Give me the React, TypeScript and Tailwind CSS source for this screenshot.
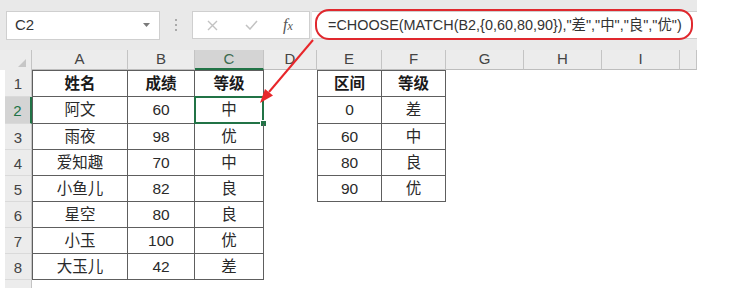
import React from "react";

const COLS = [
  { key: "A", w: "w-[96px]" },
  { key: "B", w: "w-[67px]" },
  { key: "C", w: "w-[69px]" },
  { key: "D", w: "w-[53px]" },
  { key: "E", w: "w-[65px]" },
  { key: "F", w: "w-[64px]" },
  { key: "G", w: "w-[78px]" },
  { key: "H", w: "w-[78px]" },
  { key: "I", w: "w-[78px]" },
  { key: "", w: "w-[17px]" },
];

// scores table (A1:C8) and lookup table (E1:F5)
const scores = [
  ["姓名", "成绩", "等级"],
  ["阿文", "60", "中"],
  ["雨夜", "98", "优"],
  ["爱知趣", "70", "中"],
  ["小鱼儿", "82", "良"],
  ["星空", "80", "良"],
  ["小玉", "100", "优"],
  ["大玉儿", "42", "差"],
];

const ranges = [
  ["区间", "等级"],
  ["0", "差"],
  ["60", "中"],
  ["80", "良"],
  ["90", "优"],
];

function cellValue(row: number, col: number) {
  if (col <= 2) return scores[row - 1]?.[col];
  if (col === 4 || col === 5) return ranges[row - 1]?.[col - 4];
  return undefined;
}

function inTable(row: number, col: number) {
  if (col <= 2) return row >= 1 && row <= 8;
  if (col === 4 || col === 5) return row >= 1 && row <= 5;
  return false;
}

function Cell({ row, col }: { row: number; col: number }) {
  const boxed = inTable(row, col);
  const value = cellValue(row, col);
  const selected = row === 2 && col === 2;
  return (
    <div
      className={[
        "relative h-full flex items-center justify-center",
        COLS[col].w,
        boxed ? "border-r border-b border-[#5e5e5e]" : "",
        boxed && (col === 0 || col === 4) ? "border-l" : "",
        boxed && row === 1 ? "border-t" : "",
        row === 1 ? "font-bold text-[#1a1a1a]" : "text-[#2a2a2a]",
      ].join(" ")}
    >
      {value}
      {selected && (
        <>
          <div className="absolute -left-px -top-px -right-px -bottom-px border-2 border-[#217346]" />
          <div className="absolute -right-[4px] -bottom-[4px] w-[7px] h-[7px] bg-[#217346] border border-white" />
        </>
      )}
    </div>
  );
}

function SheetRow({ row, h, label = true }: { row: number; h: string; label?: boolean }) {
  const active = row === 2;
  return (
    <div className={`flex ${h}`}>
      <div className="w-[5px]" />
      <div
        className={[
          "w-[27px] h-full flex items-center justify-center pt-[3px] text-[15px] border-b border-[#dadada]",
          active
            ? "bg-[#d4d4d4] text-[#217346] border-r-2 border-r-[#217346]"
            : "bg-[#ececec] text-[#444] border-r border-r-[#c4c4c4]",
        ].join(" ")}
      >
        {label ? row : null}
      </div>
      {COLS.map((_, c) => (
        <Cell key={c} row={row} col={c} />
      ))}
    </div>
  );
}

function FormulaBar() {
  return (
    <div className="flex items-center h-[50px] bg-[#e9e9e9]">
      <div className="ml-[6px] w-[154px] h-[29px] bg-white border border-[#cfcfcf] flex items-center justify-between pl-[8px] pr-[9px]">
        <span className="text-[15px] text-[#333]">C2</span>
        <svg width="7" height="4" viewBox="0 0 7 4">
          <path d="M0 0h7L3.5 4z" fill="#7a7a7a" />
        </svg>
      </div>
      <div className="w-[32px] flex flex-col items-center gap-[3px]">
        <span className="w-[2px] h-[2px] bg-[#aaa]" />
        <span className="w-[2px] h-[2px] bg-[#aaa]" />
        <span className="w-[2px] h-[2px] bg-[#aaa]" />
      </div>
      <div className="w-[118px] h-[28px] bg-white border border-[#cfcfcf] flex items-center">
        <svg className="ml-[14px]" width="11" height="11" viewBox="0 0 11 11">
          <path d="M1 1l9 9M10 1l-9 9" stroke="#c2c2c2" strokeWidth="1.4" />
        </svg>
        <svg className="ml-[27px]" width="13" height="10" viewBox="0 0 13 10">
          <path d="M1 5l4 4 7-8" stroke="#c2c2c2" strokeWidth="1.5" fill="none" />
        </svg>
        <span className="ml-[25px] font-['Liberation_Serif',serif] italic text-[16px] text-[#555] leading-none">
          f<span className="text-[12px]">x</span>
        </span>
      </div>
      <div className="relative ml-[2px] flex-1 h-[28px] bg-white border-y border-[#cfcfcf] flex items-center pl-[16px] pt-[2px]">
        <span className="text-[14.4px] text-[#333] whitespace-nowrap">
          =CHOOSE(MATCH(B2,{"{"}0,60,80,90{"}"}),"差","中","良","优")
        </span>
        <div className="absolute left-[3px] right-[4px] -top-[3px] -bottom-[2px] border-2 border-[#e0282e] rounded-[14px]" />
      </div>
    </div>
  );
}

function ColumnHeader() {
  return (
    <div className="flex h-[20px] bg-[#ececec] text-[15px] text-[#444]">
      <div className="w-[32px] h-full flex items-end justify-end pr-[5px] pb-[3px] border-r border-[#c4c4c4]">
        <svg width="8" height="8" viewBox="0 0 8 8">
          <path d="M8 0v8H0z" fill="#c6c6c6" />
        </svg>
      </div>
      {COLS.map((c) => (
        <div
          key={c.key || "J"}
          className={[
            "h-full flex items-center justify-center",
            c.w,
            c.key === "C"
              ? "bg-[#d4d4d4] text-[#3b6b4f] border-b-2 border-[#217346] border-r border-r-[#c4c4c4]"
              : "border-r border-[#c4c4c4] border-b border-b-[#bdbdbd]",
          ].join(" ")}
        >
          {c.key}
        </div>
      ))}
    </div>
  );
}

export default function App() {
  return (
    <div className="relative w-[731px] h-[288px] overflow-hidden bg-white font-['Liberation_Sans','Noto_Sans_CJK_SC',sans-serif]">
      <div className="w-[697px]">
        <FormulaBar />
        <ColumnHeader />
        <div className="text-[15.5px]">
          <SheetRow row={1} h="h-[27px]" />
          <SheetRow row={2} h="h-[27px]" />
          {[3, 4, 5, 6, 7, 8].map((r) => (
            <SheetRow key={r} row={r} h="h-[26px]" />
          ))}
          <SheetRow row={9} h="h-[26px]" label={false} />
        </div>
      </div>

      {/* red arrow annotation */}
      <svg className="absolute inset-0 pointer-events-none" width="731" height="288">
        <line x1="313" y1="40" x2="269" y2="92" stroke="#e8262a" strokeWidth="2" />
        <path d="M260 103L273 95.5L265 89z" fill="#e8262a" />
      </svg>
    </div>
  );
}
